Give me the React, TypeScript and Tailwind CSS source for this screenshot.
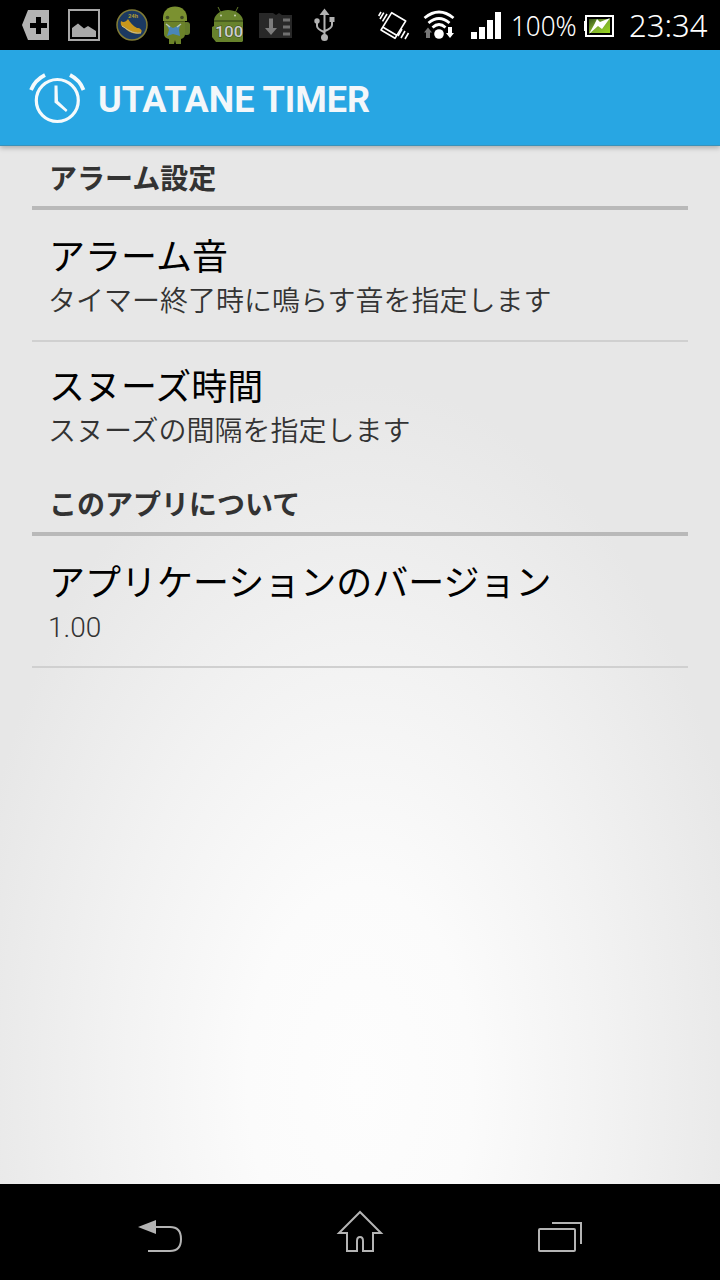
import type { ReactNode } from "react";

const fontStack = "font-[Roboto,'Noto_Sans_CJK_JP',sans-serif]";

function NotificationIcon({ children }: { children: ReactNode }) {
  return (
    <svg width="48" height="50" viewBox="0 0 48 50" className="shrink-0">
      {children}
    </svg>
  );
}

function NotificationIcons() {
  return (
    <div className="flex pl-3">
      <NotificationIcon>
        <path
          fillRule="evenodd"
          fill="#b3b3b3"
          d="M10 25 16 10H37V40H16ZM24 17v6h-6v5h6v6h5v-6h6v-5h-6v-6Z"
        />
      </NotificationIcon>
      <NotificationIcon>
        <rect x="9" y="10" width="30" height="30" fill="none" stroke="#a8a8a8" strokeWidth="2" />
        <path d="M12 28 18 23.500 24 28.500 28 26 36 31V37H12Z" fill="#a8a8a8" />
      </NotificationIcon>
      <NotificationIcon>
        <circle cx="24" cy="25" r="15" fill="#1b3961" stroke="#827c36" strokeWidth="1.5" />
        <text
          x="25"
          y="18"
          textAnchor="middle"
          fontSize="6"
          fontWeight="bold"
          fontFamily="Roboto"
          fill="#b39c32"
        >
          24h
        </text>
        <path
          d="M13 21c2 2 5 1 7-2 2 3 5 7 9 9 3 0 6 2 4 5-6 2-13-1-16-5-3-1-5-3-4-7Z"
          fill="#c8971c"
        />
        <path d="M14 26c5 3 10 8 19 7" fill="none" stroke="#c3bf9c" />
      </NotificationIcon>
      <NotificationIcon>
        <rect x="27" y="22" width="7" height="13" rx="3" fill="#647b2b" />
        <path d="M7 21v-3C7 11 12 6.500 19 6.500S31 11 31 18v3Z" fill="#7b9130" />
        <path d="M8 21h21v13q0 4-4 5v5h-5l-1-4-1 4h-5v-5q-5-1-5-5Z" fill="#6b8229" />
        <path d="M8 21.500h21" stroke="#4d5f1e" />
        <circle cx="11.500" cy="17.500" r="1.800" fill="#3f4b25" />
        <circle cx="26" cy="17.500" r="1.800" fill="#3f4b25" />
        <path d="m11 25 6 3 7-3-1 5 1 6-7-2-6 2 2-6Z" fill="#4a86b8" />
        <path d="m10 24 4 3m11-3-4 3" stroke="#b6c6b5" strokeWidth="1.5" />
      </NotificationIcon>
      <NotificationIcon>
        <path d="m14 7 3 6M34 7l-3 6" stroke="#647b2b" />
        <path d="M10 20c1-6 7-10 14-10s14 4 15 10v21l-1 1H12l-4-5V27l2-1Z" fill="#67822c" />
        <path d="M10 21h29" stroke="#2c3b12" />
        <circle cx="17" cy="15.5" r="1" fill="#c9d1b4" />
        <circle cx="31" cy="15.5" r="1" fill="#c9d1b4" />
        <text
          x="11"
          y="37"
          fontSize="15.500"
          fontWeight="500"
          fontFamily="Roboto"
          fill="#cfcfcf"
          stroke="#34451a"
          strokeWidth="1"
          paintOrder="stroke"
          textLength="28"
          lengthAdjust="spacingAndGlyphs"
        >
          100
        </text>
      </NotificationIcon>
      <NotificationIcon>
        <path d="M7 13h14l3 2 3-2 3 2h10v23H7Z" fill="#282828" />
        <path d="M17 18.5h4V28h4l-6 7-6-7h4Z" fill="#7c7c7c" />
        <path d="M31 20h7M31 27h7M31 34h7" stroke="#707070" strokeWidth="3" />
      </NotificationIcon>
      <NotificationIcon>
        <path d="M24.500 14v24M17 22v4q0 3 7 6M32 21v4q0 3-7 6" fill="none" stroke="#b2b2b2" strokeWidth="2" />
        <path d="m19.500 15 5-6.500 5 6.500Z" fill="#b2b2b2" />
        <circle cx="24.500" cy="37.500" r="3.500" fill="#b2b2b2" />
        <circle cx="17" cy="21" r="2.700" fill="#b2b2b2" />
        <path d="M29.500 17h5v5h-5Z" fill="#b2b2b2" />
      </NotificationIcon>
    </div>
  );
}

function VibrateIcon() {
  return (
    <svg width="32" height="50" viewBox="0 0 32 50" fill="none" stroke="#fff" strokeWidth="1.600">
      <path d="m13.700 12.700 14 8.300L17 38.300 3 30ZM5.500 27.500l13.500 8" strokeLinejoin="round" />
      <path d="m3 12-2.300 4M5.800 12.700 2 19M9 14l-4.500 7.300M24 29l-4 7M27 31l-4 7M30.500 33l-3.500 6" />
    </svg>
  );
}

function WifiIcon() {
  return (
    <svg width="34" height="50" viewBox="0 0 34 50">
      <path
        d="M2.500 18q14.500-12 29 0M6.500 23q10.500-9 21 0M10.500 27.500q6.500-6 13 0"
        fill="none"
        stroke="#fff"
        strokeWidth="2.800"
      />
      <circle cx="17" cy="34" r="4.800" fill="#fff" />
      <path d="m2 32.500 4-5 4 5H8v5.500H4v-5.500Z" fill="#777" />
      <path d="M26 27h4v6h2l-4 5-4-5h2Z" fill="#fff" />
    </svg>
  );
}

function BatteryIcon() {
  return (
    <svg width="30" height="50" viewBox="0 0 30 50">
      <defs>
        <linearGradient id="charge" x1="0" x2="1" y1="0" y2="1">
          <stop offset="0" stopColor="#35531a" />
          <stop offset=".5" stopColor="#7fae2f" />
          <stop offset="1" stopColor="#97d61c" />
        </linearGradient>
      </defs>
      <rect x="2" y="16" width="27" height="20" fill="#000" stroke="#fff" strokeWidth="2" />
      <path d="M0 21h3v10H0Z" fill="#fff" />
      <rect x="5" y="19" width="21" height="14" fill="url(#charge)" />
      <path d="m13 19 3 3 10-4-8 11-4-3-9 8 5-9Z" fill="#fff" />
    </svg>
  );
}

function StatusBar() {
  return (
    <div className="flex h-[50px] items-center justify-between bg-black pr-[12px] text-white">
      <NotificationIcons />
      <div className="flex items-center">
        <VibrateIcon />
        <div className="ml-3">
          <WifiIcon />
        </div>
        <svg width="31" height="50" viewBox="0 0 31 50" fill="#fff" className="ml-[15px]">
          <path d="M0 32h6v7H0ZM8 27h6v12H8ZM16 20h6v19h-6ZM24 12h6v27h-6Z" />
        </svg>
        <span className="ml-[9px] w-[66px] font-['Noto_Sans'] text-[28px] leading-[48px] font-light whitespace-nowrap">
          <span className="inline-block origin-left scale-x-[0.93]">100%</span>
        </span>
        <div className="ml-[7px]">
          <BatteryIcon />
        </div>
        <span className="ml-[15px] w-[79px] pt-px font-['Noto_Sans'] text-[31px] leading-[49px] font-light whitespace-nowrap">
          23:34
        </span>
      </div>
    </div>
  );
}

function ActionBar() {
  return (
    <header className="flex h-24 items-center border-b border-[#3b92b9] bg-[#28a6e3] pl-7 shadow-[0_2px_5px_rgba(0,0,0,0.25)]">
      <svg width="58" height="58" viewBox="0 0 58 58" fill="none" stroke="#f5fafc">
        <circle cx="29.300" cy="31.500" r="21" strokeWidth="3.200" />
        <path d="M3 21Q7 11 17 6M42 6q10 5 13.500 15" strokeWidth="3.800" />
        <path d="M26.500 16.500h3L30 32l9.500 9-1.500 2-11.500-9.500Z" fill="#f5fafc" stroke="none" />
      </svg>
      <h1 className="ml-3 pt-[5px] text-[36px] leading-none font-bold text-[#f3f7fa]">
        UTATANE TIMER
      </h1>
    </header>
  );
}

function SectionHeader({ children }: { children: ReactNode }) {
  return (
    <h2 className="flex h-16 items-center border-b-4 border-[#b9b9b9] pt-[7px] pl-[17px] text-[28px] leading-none font-bold text-[#333]">
      {children}
    </h2>
  );
}

interface PreferenceProps {
  title: string;
  summary: string;
  divider?: boolean;
}

function Preference({ title, summary, divider = true }: PreferenceProps) {
  return (
    <div className={divider ? "border-b-2 border-[#d0d0d0] pt-[25px]" : "pt-[23px]"}>
      <div className={divider ? "h-[105px] px-[17px]" : "h-[107px] px-[17px]"}>
        <p className="text-[36px] leading-[46px] text-black">{title}</p>
        <p className="-ml-px text-[28px] leading-[42px] font-[350] text-[#333]">{summary}</p>
      </div>
    </div>
  );
}

function NavigationBar() {
  return (
    <nav className="flex h-24 items-center justify-between bg-black px-[136px]">
      <svg width="48" height="48" viewBox="0 0 48 48" fill="none" stroke="#b4b4b4" strokeWidth="2">
        <path d="M18 19h16c8 0 11 5 11 12s-3 12-11 12H12" />
        <path d="m2 19 18-7v14Z" fill="#b4b4b4" stroke="none" />
      </svg>
      <svg width="48" height="48" viewBox="0 0 48 48" fill="none" stroke="#b4b4b4" strokeWidth="2">
        <path d="M24 4 3 25h8v18h10V33q0-4 3-4t3 4v10h10V25h8Z" />
      </svg>
      <svg width="48" height="48" viewBox="0 0 48 48" fill="none" stroke="#b4b4b4" strokeWidth="2">
        <rect x="3" y="21" width="36" height="22" rx="1" />
        <path d="M16 15h29v21" />
      </svg>
    </nav>
  );
}

export default function App() {
  return (
    <div lang="ja" className={`flex h-[1280px] w-[720px] flex-col overflow-hidden ${fontStack}`}>
      <StatusBar />
      <div className="flex flex-1 flex-col bg-[radial-gradient(ellipse_400px_700px_at_50%_91%,#fdfdfd_0%,#fbfbfb_28%,#f2f2f2_62%,#e7e7e7_100%)]">
        <ActionBar />
        <main className="px-8">
          <SectionHeader>アラーム設定</SectionHeader>
          <Preference title="アラーム音" summary="タイマー終了時に鳴らす音を指定します" />
          <Preference title="スヌーズ時間" summary="スヌーズの間隔を指定します" divider={false} />
          <SectionHeader>このアプリについて</SectionHeader>
          <Preference title="アプリケーションのバージョン" summary="1.00" />
        </main>
      </div>
      <NavigationBar />
    </div>
  );
}
